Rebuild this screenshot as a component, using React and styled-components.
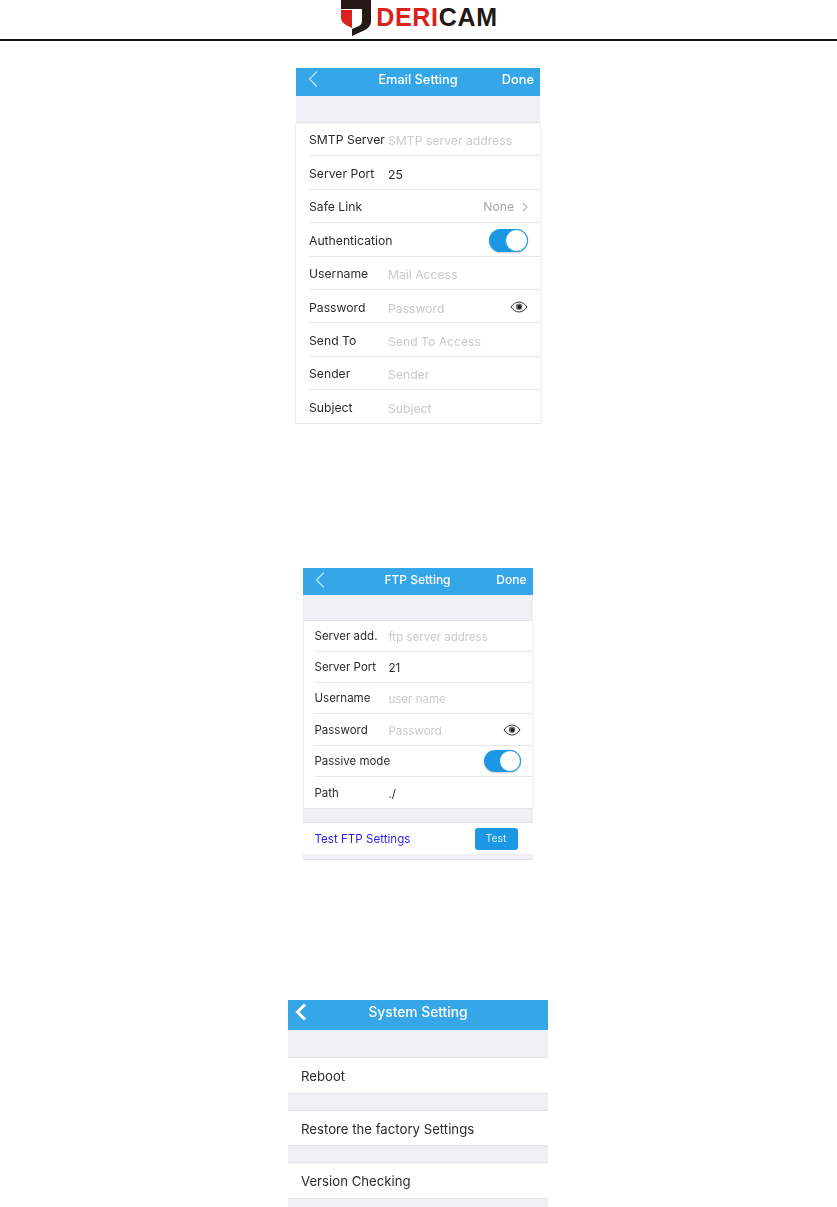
import styled, { createGlobalStyle } from 'styled-components';

const GlobalStyle = createGlobalStyle`
  html, body {
    margin: 0;
    padding: 0;
    background: #fff;
  }
  body {
    font-family: Inter, "Liberation Sans", sans-serif;
  }
`;

const Page = styled.div`
  width: 837px;
  height: 1207px;
  overflow: hidden;
  display: flex;
  flex-direction: column;
  align-items: center;
`;

const Header = styled.header`
  width: 100%;
  height: 41px;
  box-sizing: border-box;
  padding-left: 2px;
  border-bottom: 2px solid #111;
  display: flex;
  justify-content: center;
  align-items: flex-start;
  gap: 5px;
  overflow: hidden;
  flex-shrink: 0;
`;

const Brand = styled.div`
  font-family: "Liberation Sans", Arial, sans-serif;
  font-weight: 700;
  font-size: 25px;
  line-height: 25px;
  margin-top: 5px;
  letter-spacing: 0.7px;
  color: #231815;
  span {
    color: #d9221c;
  }
`;

const Screen = styled.section`
  width: ${(p) => p.$width}px;
  margin-top: ${(p) => p.$top}px;
  margin-right: ${(p) => p.$gutter || 1}px;
  flex-shrink: 0;
  background: #efeff4;
  display: flex;
  flex-direction: column;
  filter: blur(0.3px);
`;

const NavBar = styled.div`
  height: ${(p) => p.$height}px;
  box-sizing: border-box;
  background: #35a7e9;
  color: #fff;
  display: flex;
  align-items: center;
  justify-content: space-between;
  position: relative;
  padding: 0 6px ${(p) => p.$lift}px ${(p) => p.$left || 11}px;
  font-size: ${(p) => p.$size}px;
  font-weight: 500;
`;

const NavTitle = styled.div`
  position: absolute;
  left: 0;
  right: 0;
  top: 0;
  bottom: ${(p) => p.$lift}px;
  display: flex;
  align-items: center;
  justify-content: center;
`;

const Spacer = styled.div`
  height: ${(p) => p.$height}px;
  border-bottom: 1px solid #e2e2e7;
  box-sizing: border-box;
`;

const Group = styled.div`
  background: #fff;
  margin: 0 ${(p) => (p.$bleed ? '-1px' : '0')};
  border-left: 1px solid #eeeef3;
  border-right: 1px solid #eeeef3;
  border-bottom: 1px solid #e6e6ea;
`;

const Row = styled.div`
  height: ${(p) => p.$height}px;
  box-sizing: border-box;
  margin-left: ${(p) => p.$inset}px;
  padding: ${(p) => p.$drop}px ${(p) => p.$pad}px 0 0;
  display: flex;
  align-items: center;
  font-size: ${(p) => p.$size}px;
  color: #2b2b2b;
  border-bottom: ${(p) => (p.$last ? 'none' : '1px solid #e6e6ea')};
`;

const Label = styled.div`
  width: ${(p) => p.$width}px;
  flex-shrink: 0;
  white-space: nowrap;
`;

const Value = styled.div`
  flex: 1;
  white-space: nowrap;
  padding-top: 2px;
  color: ${(p) => (p.$placeholder ? '#c9c9ce' : '#2b2b2b')};
`;

const Toggle = styled.div`
  width: ${(p) => p.$width}px;
  height: ${(p) => p.$height}px;
  border-radius: 12px;
  background: #1b97e3;
  display: flex;
  justify-content: flex-end;
  box-shadow: 0 1px 2px rgba(0, 0, 0, 0.2);
`;

const Knob = styled.div`
  width: ${(p) => p.$size}px;
  height: ${(p) => p.$size}px;
  box-sizing: border-box;
  border-radius: 50%;
  background: #fff;
  border: 1px solid #1b97e3;
`;

const LinkValue = styled.div`
  color: #a5a5ab;
  display: flex;
  align-items: center;
  gap: 8px;
`;

const TestRow = styled.div`
  height: 31px;
  background: #fff;
  display: flex;
  align-items: center;
  justify-content: space-between;
  padding: 0 15px 0 12px;
  font-size: 11.6px;
  color: #2a1ff0;
`;

const TestButton = styled.div`
  width: 43px;
  height: 22px;
  border-radius: 3px;
  background: #1b97e3;
  color: #d6ecf9;
  font-size: 10.5px;
  display: flex;
  align-items: center;
  justify-content: center;
`;

const MenuRow = styled.div`
  height: 35.5px;
  background: #fff;
  padding: 2px 0 0 13px;
  display: flex;
  align-items: center;
  font-size: 13.2px;
  color: #2b2b2b;
  border-bottom: 1px solid #e4e4e9;
  box-sizing: border-box;
`;

const ShieldLogo = () => (
  <svg width="30" height="36" viewBox="0 0 30 36">
    <path d="M0 0h30v21c0 5-3 7-6 9l-13 6v-7l7-3c2-1 3-3 3-5V9H0z" fill="#231815" />
    <path d="M0 10h11v18l-6-3c-3-2-5-4-5-7z" fill="#d9221c" />
  </svg>
);

const BackIcon = ({ bold }) => (
  <svg width="12" height="18" viewBox="0 0 12 18" fill="none">
    <path d="M10 1.5 2.5 9l7.5 7.5" stroke={bold ? '#fff' : '#bfe2f7'} strokeWidth={bold ? 3 : 1.3} />
  </svg>
);

const Chevron = () => (
  <svg width="6" height="10" viewBox="0 0 6 10" fill="none">
    <path d="M1 1l4 4-4 4" stroke="#b4b4ba" strokeWidth="1.1" />
  </svg>
);

const EyeIcon = () => (
  <svg width="18" height="12" viewBox="0 0 18 12" fill="none">
    <path d="M1 6c2-3 5-5 8-5s6 2 8 5c-2 3-5 5-8 5s-6-2-8-5z" stroke="#333" strokeWidth="1" />
    <circle cx="9" cy="5.8" r="3.3" fill="#777" />
    <circle cx="9.4" cy="6" r="2" fill="#222" />
  </svg>
);

const emailFields = [
  ['Username', 'Mail Access'],
  ['Password', 'Password', true],
  ['Send To', 'Send To Access'],
  ['Sender', 'Sender'],
];

const App = () => {
  const emailRow = { $height: 33.4, $inset: 13, $pad: 12, $size: 12.2, $drop: 2 };
  const ftpRow = { $height: 31.3, $inset: 11, $pad: 10.5, $size: 11.5, $drop: 0 };

  return (
    <Page>
      <GlobalStyle />
      <Header>
        <ShieldLogo />
        <Brand>
          <span>DERI</span>CAM
        </Brand>
      </Header>

      <Screen $width={244} $top={27}>
        <NavBar $height={28} $lift={6} $size={12.8}>
          <BackIcon />
          <NavTitle $lift={6}>Email Setting</NavTitle>
          <span>Done</span>
        </NavBar>
        <Spacer $height={27} />
        <Group $bleed>
          <Row {...emailRow} $drop={0}>
            <Label $width={79}>SMTP Server</Label>
            <Value $placeholder>SMTP server address</Value>
          </Row>
          <Row {...emailRow}>
            <Label $width={79}>Server Port</Label>
            <Value>25</Value>
          </Row>
          <Row {...emailRow}>
            <Label $width={79}>Safe Link</Label>
            <Value />
            <LinkValue>
              None <Chevron />
            </LinkValue>
          </Row>
          <Row {...emailRow}>
            <Label $width={79}>Authentication</Label>
            <Value />
            <Toggle $width={39} $height={23}>
              <Knob $size={23} />
            </Toggle>
          </Row>
          {emailFields.map(([label, hint, hasEye]) => (
            <Row key={label} {...emailRow}>
              <Label $width={79}>{label}</Label>
              <Value $placeholder>{hint}</Value>
              {hasEye && <EyeIcon />}
            </Row>
          ))}
          <Row {...emailRow} $height={32.4} $last>
            <Label $width={79}>Subject</Label>
            <Value $placeholder>Subject</Value>
          </Row>
        </Group>
      </Screen>

      <Screen $width={230} $gutter={2} $top={144}>
        <NavBar $height={27} $lift={3} $size={12}>
          <BackIcon />
          <NavTitle $lift={3}>FTP Setting</NavTitle>
          <span>Done</span>
        </NavBar>
        <Spacer $height={26} />
        <Group>
          <Row {...ftpRow}>
            <Label $width={74}>Server add.</Label>
            <Value $placeholder>ftp server address</Value>
          </Row>
          <Row {...ftpRow}>
            <Label $width={74}>Server Port</Label>
            <Value>21</Value>
          </Row>
          <Row {...ftpRow}>
            <Label $width={74}>Username</Label>
            <Value $placeholder>user name</Value>
          </Row>
          <Row {...ftpRow}>
            <Label $width={74}>Password</Label>
            <Value $placeholder>Password</Value>
            <EyeIcon />
          </Row>
          <Row {...ftpRow}>
            <Label $width={74}>Passive mode</Label>
            <Value />
            <Toggle $width={37} $height={22}>
              <Knob $size={22} />
            </Toggle>
          </Row>
          <Row {...ftpRow} $height={31} $last>
            <Label $width={74}>Path</Label>
            <Value>./</Value>
          </Row>
        </Group>
        <Spacer $height={14} />
        <TestRow>
          Test FTP Settings
          <TestButton>Test</TestButton>
        </TestRow>
        <Spacer $height={6} />
      </Screen>

      <Screen $width={260} $top={140}>
        <NavBar $height={30} $lift={6} $left={7} $size={13.8}>
          <BackIcon bold />
          <NavTitle $lift={6}>System Setting</NavTitle>
        </NavBar>
        <Spacer $height={28} />
        <MenuRow>Reboot</MenuRow>
        <Spacer $height={17} />
        <MenuRow>Restore the factory Settings</MenuRow>
        <Spacer $height={17} />
        <MenuRow>Version Checking</MenuRow>
        <Spacer $height={9} />
      </Screen>
    </Page>
  );
};

export default App;
